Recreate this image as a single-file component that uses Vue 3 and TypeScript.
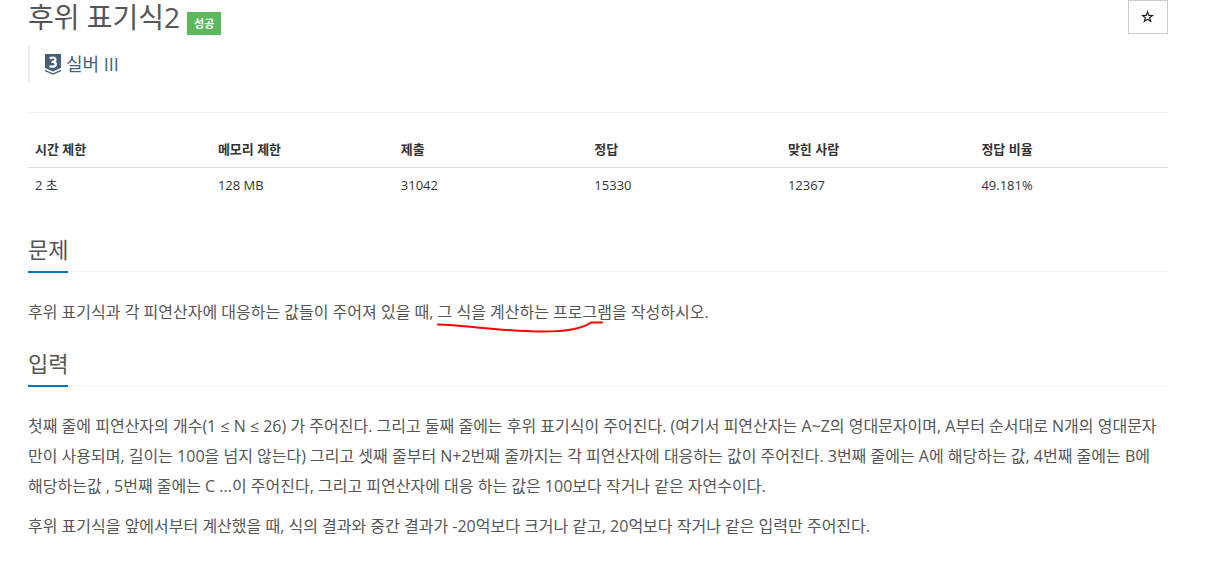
<script setup lang="ts">
const stats: { label: string; value: string }[] = [
  { label: '시간 제한', value: '2 초' },
  { label: '메모리 제한', value: '128 MB' },
  { label: '제출', value: '31042' },
  { label: '정답', value: '15330' },
  { label: '맞힌 사람', value: '12367' },
  { label: '정답 비율', value: '49.181%' },
]
</script>

<template>
  <main class="page">
    <header class="header">
      <div>
        <h1>후위 표기식2 <span class="badge">성공</span></h1>
        <blockquote class="tier">
          <a href="#">
            <svg viewBox="0 0 18 22" width="18" height="22" aria-hidden="true">
              <path d="M1 1h16v14l-8 3.500-8-3.500z" fill="#435f7a" />
              <path d="M1 15.300l8 3.600 8-3.600v1l-8 3.600-8-3.600z" fill="#fff" />
              <path d="M1 16.700l8 3.500 8-3.500v1.600l-8 3.500-8-3.500z" fill="#435f7a" />
              <path d="M5.700 5.500c2.200-1.600 5.900-.9 5.700 1.300 0 1.400-1.200 2.100-2.900 2.100h-.9.900c2 0 3.300.8 3.300 2.400 0 2.500-3.900 3-6.300 1.700" fill="none" stroke="#fff" stroke-width="2.300" />
            </svg>
            실버 III
          </a>
        </blockquote>
      </div>
      <button class="star" type="button" aria-label="즐겨찾기">
        <svg viewBox="0 0 14 14" width="14" height="14" aria-hidden="true">
          <path fill-rule="evenodd" d="M6.500 0l1.700 4.700 5 .2-3.900 3 1.400 4.900-4.200-2.800-4.200 2.800 1.400-4.900-3.900-3 5-.2zM6.500 3.400l-.9 2.500-2.500.1 2 1.500-.7 2.500 2.100-1.400 2.100 1.400-.7-2.500 2-1.500-2.500-.1z" fill="#222" />
        </svg>
      </button>
    </header>

    <table class="stats">
      <thead>
        <tr><th v-for="s in stats" :key="s.label" scope="col">{{ s.label }}</th></tr>
      </thead>
      <tbody>
        <tr><td v-for="s in stats" :key="s.label">{{ s.value }}</td></tr>
      </tbody>
    </table>

    <section>
      <div class="headline"><h2>문제</h2></div>
      <p>
        후위 표기식과 각 피연산자에 대응하는 값들이 주어져 있을 때,
        <span class="marked">그 식을 계산하는 프로그램을<svg class="stroke" viewBox="0 0 168 16" width="168" height="16" aria-hidden="true"><path d="M1 5.500C28 6 65 12.500 106 12.500c25 0 40-3 48-9h11" fill="none" stroke="#f00" stroke-width="2" stroke-linecap="round" /></svg></span>
        작성하시오.
      </p>
    </section>

    <section>
      <div class="headline"><h2>입력</h2></div>
      <p>첫째 줄에 피연산자의 개수(1 ≤ N ≤ 26) 가 주어진다. 그리고 둘째 줄에는 후위 표기식이 주어진다. (여기서 피연산자는 A~Z의 영대문자이며, A부터 순서대로 N개의 영대문자만이 사용되며, 길이는 100을 넘지 않는다) 그리고 셋째 줄부터 N+2번째 줄까지는 각 피연산자에 대응하는 값이 주어진다. 3번째 줄에는 A에 해당하는 값, 4번째 줄에는 B에 해당하는값 , 5번째 줄에는 C ...이 주어진다, 그리고 피연산자에 대응 하는 값은 100보다 작거나 같은 자연수이다.</p>
      <p>후위 표기식을 앞에서부터 계산했을 때, 식의 결과와 중간 결과가 -20억보다 크거나 같고, 20억보다 작거나 같은 입력만 주어진다.</p>
    </section>
  </main>
</template>

<style>
body { margin: 0; background: #fff; }
</style>

<style scoped>
.page {
  padding: 0 50px 0 28px;
  font-family: "Open Sans", "Noto Sans CJK KR", sans-serif;
  font-size: 13px;
  line-height: 20px;
  color: #333;
}
.header {
  display: flex;
  justify-content: space-between;
  align-items: flex-start;
  min-height: 112px;
  border-bottom: 1px solid #eee;
}
h1 {
  display: flex;
  align-items: center;
  gap: 7px;
  margin: 0;
  font-size: 28px;
  font-weight: 400;
  line-height: 35px;
  color: #555;
}
.badge {
  margin-top: 12px;
  padding: 0 7px;
  background: #5cb85c;
  color: #fff;
  font-size: 11px;
  font-weight: 700;
  line-height: 23px;
}
.tier {
  margin: 10px 0 0;
  padding: 0 14px;
  border-left: 2px solid #eee;
  font-size: 18px;
  line-height: 38px;
}
.tier a {
  display: flex;
  align-items: center;
  gap: 4px;
  color: #435f7a;
  text-decoration: none;
}
.star {
  display: flex;
  align-items: center;
  justify-content: center;
  width: 40px;
  height: 34px;
  padding: 0;
  border: 1px solid #ccc;
  background: #fff;
}
.stats {
  width: 100%;
  margin: 18px 0 30px;
  border-collapse: collapse;
  table-layout: fixed;
}
th, td {
  width: 17%;
  padding: 8px 7px;
  text-align: left;
}
td { padding-top: 7px; }
th:nth-child(-n+2) { width: 16%; }
th { border-bottom: 1px solid #ddd; font-weight: 700; }
section { margin-bottom: 20px; }
.headline {
  margin-bottom: 25px;
  border-bottom: 1px dotted #e4e9f0;
}
h2 {
  display: inline-block;
  margin: 0 0 -2px;
  padding-bottom: 5px;
  border-bottom: 2px solid #0076bd;
  font-size: 22px;
  font-weight: 400;
  line-height: 33px;
  vertical-align: top;
  color: #555;
}
p {
  margin: 0 0 10px;
  font-size: 16px;
  line-height: 30px;
  color: #555;
}
.marked { position: relative; }
.stroke { position: absolute; left: -1px; bottom: -12px; }
</style>
